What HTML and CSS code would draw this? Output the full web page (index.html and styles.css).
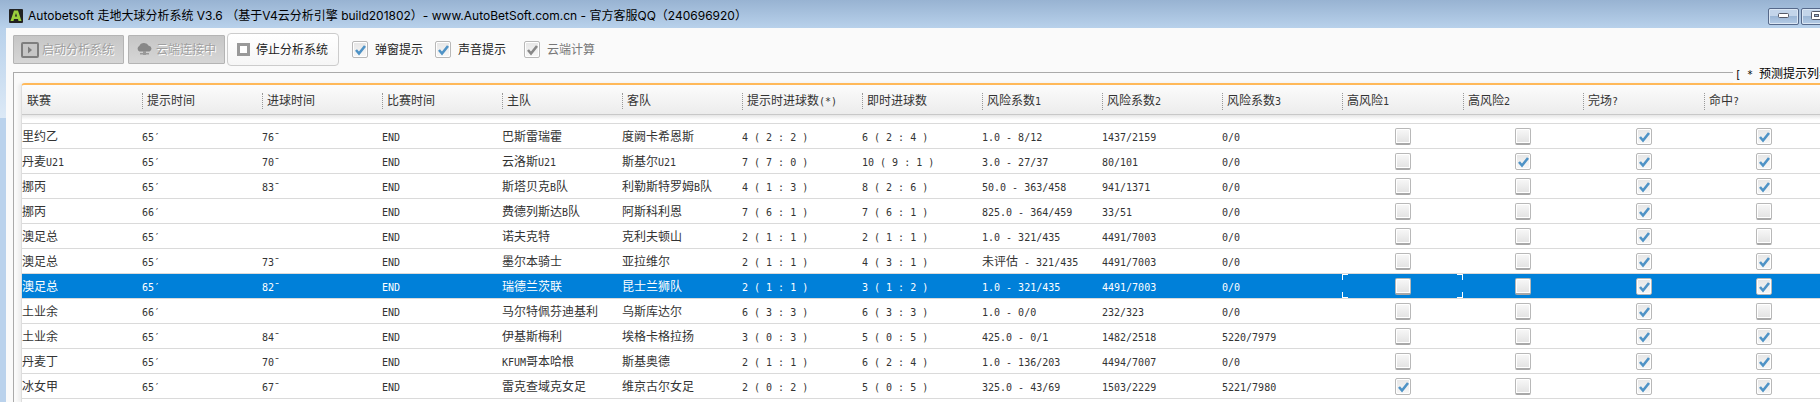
FILE: index.html
```html
<!DOCTYPE html>
<html lang="zh-CN">
<head>
<meta charset="utf-8">
<title>Autobetsoft</title>
<link rel="stylesheet" href="styles.css">
</head>
<body>
<div class="window">
  <header class="titlebar">
    <svg class="app-icon" viewBox="0 0 14 14"><rect width="14" height="14" rx="1" fill="#222"/><path d="M1.500 12 5 1.500h4L12.500 12h-3L9 10H5l-.5 2z" fill="#9bd03c"/><path d="M5.900 7.500 7 4l1.100 3.500z" fill="#222"/></svg>
    <h1 class="title">Autobetsoft 走地大球分析系统 V3.6 （基于V4云分析引擎 build201802）- www.AutoBetSoft.com.cn - 官方客服QQ（240696920）</h1>
    <div class="window-buttons">
      <button class="wbtn" aria-label="最小化"><svg width="12" height="6" viewBox="0 0 12 6"><rect x=".5" y=".5" width="10" height="4" rx="1" fill="#fff" stroke="#555a68"/></svg></button>
      <button class="wbtn" aria-label="最大化"><svg width="12" height="10" viewBox="0 0 12 10"><rect x=".5" y=".5" width="10" height="8" rx="1" fill="#fff" stroke="#555a68"/><rect x="3.500" y="3.500" width="4" height="2" fill="#9cb7d6" stroke="#555a68"/></svg></button>
    </div>
  </header>
  <main class="content">
    <div class="toolbar">
      <button class="btn" disabled><svg width="18" height="16" viewBox="0 0 18 16"><rect x="1" y="1" width="16" height="14" rx="1" fill="#c6c6c6" stroke="#7e7e7e" stroke-width="2"/><path d="M7 4.500v7l4-3.500z" fill="#7e7e7e"/></svg><span>启动分析系统</span></button>
      <button class="btn btn-cloud" disabled><svg width="17" height="13" viewBox="0 0 17 13"><path d="M3.500 8.500a3 3 0 0 1-.2-5.500 5 4.200 0 0 1 9.400-.3 3 3 0 0 1 .8 5.800z" fill="#888"/><path d="M7 8h3v2h3v1.500h-3V12H7v-.5H4V10h3z" fill="#999"/></svg><span>云端连接中</span></button>
      <button class="btn btn-stop"><svg width="13" height="13" viewBox="0 0 13 13"><rect x="1.500" y="1.500" width="10" height="10" fill="#fff" stroke="#999" stroke-width="3"/></svg><span>停止分析系统</span></button>
      <label class="check"><input type="checkbox" class="cb" checked>弹窗提示</label>
      <label class="check"><input type="checkbox" class="cb" checked>声音提示</label>
      <label class="check off"><input type="checkbox" class="cb" checked disabled>云端计算</label>
    </div>
    <section class="group">
      <h2 class="legend"><span class="n">[ * </span>预测提示列表</h2>
      <div class="grid-frame">
        <table class="grid">
          <colgroup id="cols"></colgroup>
          <thead><tr id="head"></tr></thead>
          <tbody id="rows"></tbody>
        </table>
      </div>
    </section>
  </main>
</div>
<script src="grid.js"></script>
</body>
</html>
```
FILE: styles.css
```css
* { box-sizing: border-box; }
body {
  margin: 0;
  font: 12px/16px "Liberation Sans", "Noto Sans CJK SC", sans-serif;
  color: #333;
  overflow: hidden;
}
button { font: inherit; }
.window {
  height: 100vh;
  display: flex;
  flex-direction: column;
  background: linear-gradient(#b8d1eb 28px, #dce9f6 118px, #bad2ec 118px);
  overflow: hidden;
}
.titlebar {
  flex: none;
  display: flex;
  align-items: center;
  height: 28px;
  padding: 4px 0 0 9px;
  gap: 5px;
  background: linear-gradient(#98b3d2, #b8d1eb);
  color: #000;
}
.app-icon { width: 14px; height: 14px; flex: none; }
.title {
  flex: 1;
  margin: 0;
  font: 12px/18px Inter, "Noto Sans CJK SC", sans-serif;
  white-space: nowrap;
}
.window-buttons { display: flex; gap: 2px; margin-right: -12px; }
.wbtn {
  width: 31px;
  height: 17px;
  padding: 0;
  display: flex;
  align-items: center;
  justify-content: center;
  border: 1px solid #56698a;
  border-radius: 2px;
  background: linear-gradient(#c3d5ea 0 45%, #9cb7d6 50%, #b5cce6);
  box-shadow: inset 0 0 0 1px #dbe7f4;
}
.content {
  flex: 1;
  min-height: 0;
  margin-left: 6px;
  padding: 5px 0 0 7px;
  background: #fafafa;
  display: flex;
  flex-direction: column;
}
.toolbar { flex: none; display: flex; align-items: center; height: 33px; }
.btn {
  display: flex;
  align-items: center;
  gap: 3px;
  height: 29px;
  padding: 0 9px 0 7px;
  margin-right: 4px;
  border: 1px solid #b4b4b4;
  border-radius: 1px;
  background: linear-gradient(#c6c6c6, #d6d6d6);
  color: #a0a0a0;
  text-shadow: 1px 1px 0 #fff;
  white-space: nowrap;
}
.btn-cloud { padding-right: 8px; margin-right: 2px; }
.btn-stop {
  gap: 6px;
  height: 33px;
  padding: 0 10px 0 9px;
  margin-right: 13px;
  border-color: #ccc;
  border-radius: 4px;
  background: linear-gradient(#fff, #f6f6f6);
  color: #222;
  text-shadow: none;
}
.check { display: flex; align-items: center; gap: 7px; margin-right: 12px; color: #222; white-space: nowrap; }
.check.off { color: #777; margin-left: 6px; }
.cb {
  appearance: none;
  flex: none;
  width: 16px;
  height: 17px;
  margin: 0;
  border: 1px solid #b8b8b8;
  border-bottom: 2px solid #a8a8a8;
  border-radius: 2px;
  background: linear-gradient(#f8f8f8, #e2e2e2);
  box-shadow: inset 0 0 0 1px #fff;
}
.cb:checked {
  border: 1px solid #b8b8b8;
  background: url("data:image/svg+xml,%3Csvg xmlns='http://www.w3.org/2000/svg' viewBox='0 0 14 15'%3E%3Cpath d='M3 8 6 11.500 12 4' fill='none' stroke='%234f93c6' stroke-width='2.600'/%3E%3C/svg%3E") center / 14px 15px no-repeat, linear-gradient(#e6e6e6, #f8f8f8);
}
.cb:checked:disabled {
  background-image: url("data:image/svg+xml,%3Csvg xmlns='http://www.w3.org/2000/svg' viewBox='0 0 14 15'%3E%3Cpath d='M3 8 6 11.500 12 4' fill='none' stroke='%23888888' stroke-width='2.600'/%3E%3C/svg%3E"), linear-gradient(#e6e6e6, #f8f8f8);
}
.group {
  flex: 1;
  min-height: 0;
  margin-top: 6px;
  padding: 10px 0 0 7px;
  border-top: 1px solid #aaa;
  border-left: 1px solid #aaa;
  position: relative;
}
.legend {
  position: absolute;
  top: -7px;
  right: -13px;
  margin: 0;
  padding: 0 2px;
  background: #fafafa;
  color: #000;
  font-size: 12px;
  font-weight: normal;
  line-height: 16px;
  white-space: pre;
}
.grid-frame {
  height: 100%;
  overflow: hidden;
  border-left: 1px solid #ddd;
  border-top: 2px solid #ffb95a;
  border-top-left-radius: 4px;
  background: #fff;
  box-shadow: -3px 0 3px #eee;
}
.grid { table-layout: fixed; width: 1802px; border-collapse: separate; border-spacing: 0; }
.grid col { width: 120px; }
.grid col.wide { width: 121px; }
.grid th {
  height: 30px;
  padding: 3px 0 0 5px;
  background: linear-gradient(#fcfcfc, #ececec);
  border-bottom: 1px solid #c8c8c8;
  font-weight: normal;
  text-align: left;
  white-space: nowrap;
}
.grid th + th { padding-left: 0; }
.grid th + th .label { display: block; border-left: 1px dotted #999; padding-left: 4px; }
.grid td {
  height: 25px;
  padding: 2px 0 0;
  border-bottom: 1px solid #dadada;
  white-space: pre;
}
.grid .spacer td { height: 9px; padding: 0; background: linear-gradient(#e6e6e6, #fff 5px); }
.grid td.tick { padding: 0; }
.grid .tick .cb { display: block; margin: 0 auto; }
.grid .selected td { background-color: #0080d9; color: #fff; }
.grid .focus {
  --c: linear-gradient(#fff, #fff);
  background: var(--c) 0 0 / 6px 1px, var(--c) 0 0 / 1px 6px, var(--c) 100% 0 / 6px 1px, var(--c) 100% 0 / 1px 6px,
    var(--c) 0 100% / 6px 1px, var(--c) 0 100% / 1px 6px, var(--c) 100% 100% / 6px 1px, var(--c) 100% 100% / 1px 6px;
  background-repeat: no-repeat;
  background-clip: padding-box;
}
.n { font-family: "DejaVu Sans Mono", monospace; font-size: 10px; }
```
FILE: grid.js
```js
const columns = ["联赛", "提示时间", "进球时间", "比赛时间", "主队", "客队", "提示时进球数(*)", "即时进球数",
  "风险系数1", "风险系数2", "风险系数3", "高风险1", "高风险2", "完场?", "命中?"];
const matches = [
  ["里约乙", "65′", "76ˉ", "END", "巴斯雷瑞霍", "度阙卡希恩斯", "4 ( 2 : 2 )", "6 ( 2 : 4 )", "1.0 - 8/12", "1437/2159", "0/0", 0, 0, 1, 1],
  ["丹麦U21", "65′", "70ˉ", "END", "云洛斯U21", "斯基尔U21", "7 ( 7 : 0 )", "10 ( 9 : 1 )", "3.0 - 27/37", "80/101", "0/0", 0, 1, 1, 1],
  ["挪丙", "65′", "83ˉ", "END", "斯塔贝克B队", "利勒斯特罗姆B队", "4 ( 1 : 3 )", "8 ( 2 : 6 )", "50.0 - 363/458", "941/1371", "0/0", 0, 0, 1, 1],
  ["挪丙", "66′", "", "END", "费德列斯达B队", "阿斯科利恩", "7 ( 6 : 1 )", "7 ( 6 : 1 )", "825.0 - 364/459", "33/51", "0/0", 0, 0, 1, 0],
  ["澳足总", "65′", "", "END", "诺夫克特", "克利夫顿山", "2 ( 1 : 1 )", "2 ( 1 : 1 )", "1.0 - 321/435", "4491/7003", "0/0", 0, 0, 1, 0],
  ["澳足总", "65′", "73ˉ", "END", "墨尔本骑士", "亚拉维尔", "2 ( 1 : 1 )", "4 ( 3 : 1 )", "未评估 - 321/435", "4491/7003", "0/0", 0, 0, 1, 1],
  ["澳足总", "65′", "82ˉ", "END", "瑞德兰茨联", "昆士兰狮队", "2 ( 1 : 1 )", "3 ( 1 : 2 )", "1.0 - 321/435", "4491/7003", "0/0", 0, 0, 1, 1],
  ["土业余", "66′", "", "END", "马尔特佩芬迪基利", "乌斯库达尔", "6 ( 3 : 3 )", "6 ( 3 : 3 )", "1.0 - 0/0", "232/323", "0/0", 0, 0, 1, 0],
  ["土业余", "65′", "84ˉ", "END", "伊基斯梅利", "埃格卡格拉扬", "3 ( 0 : 3 )", "5 ( 0 : 5 )", "425.0 - 0/1", "1482/2518", "5220/7979", 0, 0, 1, 1],
  ["丹麦丁", "65′", "70ˉ", "END", "KFUM哥本哈根", "斯基奥德", "2 ( 1 : 1 )", "6 ( 2 : 4 )", "1.0 - 136/203", "4494/7007", "0/0", 0, 0, 1, 1],
  ["冰女甲", "65′", "67ˉ", "END", "雷克查域克女足", "维京古尔女足", "2 ( 0 : 2 )", "5 ( 0 : 5 )", "325.0 - 43/69", "1503/2229", "5221/7980", 1, 0, 1, 1]
];
const selectedRow = 6;
const focusedColumn = 11;

// Latin runs are set in the fixed-width face, half the width of a Chinese character.
const mark = text => text.replace(/[ -~′ˉ]+/g, run => `<span class="n">${run}</span>`);

document.getElementById("cols").innerHTML =
  columns.map((_, i) => `<col${i === 11 || i === 13 ? ' class="wide"' : ""}>`).join("");
document.getElementById("head").innerHTML =
  columns.map(name => `<th scope="col"><span class="label">${mark(name)}</span></th>`).join("");
document.getElementById("rows").innerHTML =
  `<tr class="spacer"><td colspan="${columns.length}"></td></tr>` +
  matches.map((match, r) => `<tr${r === selectedRow ? ' class="selected"' : ""}>` +
    match.map((value, c) => typeof value === "number"
      ? `<td class="tick${r === selectedRow && c === focusedColumn ? " focus" : ""}"><input type="checkbox" class="cb" aria-label="${match[0]} ${columns[c]}"${value ? " checked" : ""}></td>`
      : `<td>${mark(value)}</td>`).join("") + "</tr>").join("");
```
